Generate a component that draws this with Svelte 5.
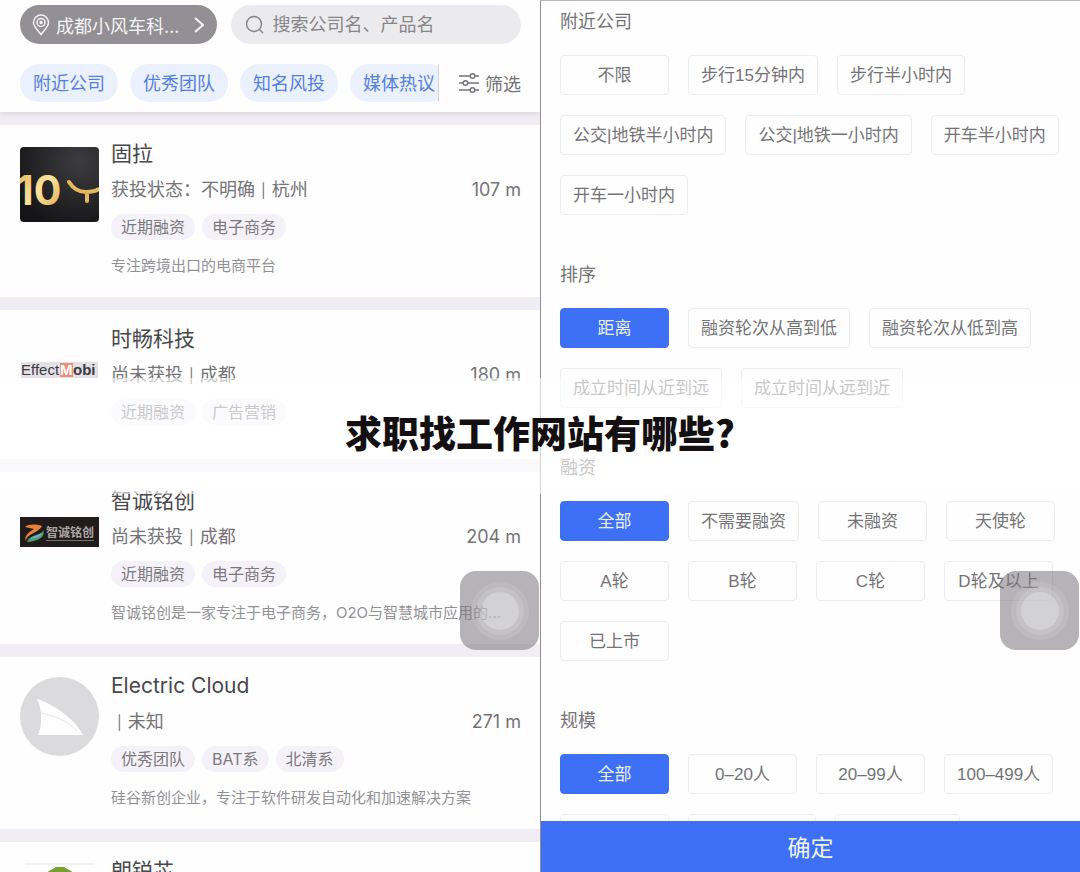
<script lang="ts">
	interface ICompany {
		name: string;
		logo: string;
		status: string;
		city: string;
		distance: string;
		tags: string[];
		description?: string;
	}

	interface IFilterGroup {
		title: string;
		options: string[];
		selected: string;
	}

	const categories = ['附近公司', '优秀团队', '知名风投', '媒体热议'];

	const companies: ICompany[] = [
		{
			name: '固拉',
			logo: 'ten',
			status: '获投状态：不明确',
			city: '杭州',
			distance: '107 m',
			tags: ['近期融资', '电子商务'],
			description: '专注跨境出口的电商平台'
		},
		{
			name: '时畅科技',
			logo: 'effect',
			status: '尚未获投',
			city: '成都',
			distance: '180 m',
			tags: ['近期融资', '广告营销']
		},
		{
			name: '智诚铭创',
			logo: 'zhicheng',
			status: '尚未获投',
			city: '成都',
			distance: '204 m',
			tags: ['近期融资', '电子商务'],
			description: '智诚铭创是一家专注于电子商务，O2O与智慧城市应用的...'
		},
		{
			name: 'Electric Cloud',
			logo: 'shark',
			status: '',
			city: '未知',
			distance: '271 m',
			tags: ['优秀团队', 'BAT系', '北清系'],
			description: '硅谷新创企业，专注于软件研发自动化和加速解决方案'
		},
		{
			name: '朗锐芯',
			logo: 'green',
			status: '',
			city: '',
			distance: '',
			tags: []
		}
	];

	let groups: IFilterGroup[] = [
		{
			title: '附近公司',
			options: [
				'不限',
				'步行15分钟内',
				'步行半小时内',
				'公交|地铁半小时内',
				'公交|地铁一小时内',
				'开车半小时内',
				'开车一小时内'
			],
			selected: ''
		},
		{
			title: '排序',
			options: [
				'距离',
				'融资轮次从高到低',
				'融资轮次从低到高',
				'成立时间从近到远',
				'成立时间从远到近'
			],
			selected: '距离'
		},
		{
			title: '融资',
			options: ['全部', '不需要融资', '未融资', '天使轮', 'A轮', 'B轮', 'C轮', 'D轮及以上', '已上市'],
			selected: '全部'
		},
		{
			title: '规模',
			options: ['全部', '0–20人', '20–99人', '100–499人', '500–999人', '1000–9999人', '10000人以上'],
			selected: '全部'
		}
	];

	const onOptionClick = (group: IFilterGroup, option: string) => {
		group.selected = option;
		groups = groups;
	};
</script>

<div class="page">
	<main class="list">
		<header>
			<div class="row">
				<button class="location">
					<svg width="18" height="22" viewBox="0 0 18 22">
						<path d="M9 20.500C6.500 17 1.500 13 1.500 8.500a7.500 7.500 0 0 1 15 0C16.500 13 11.500 17 9 20.500z" />
						<circle cx="9" cy="8.500" r="4" />
						<circle cx="9" cy="8.500" r="1" />
					</svg>
					<span>成都小风车科...</span>
					<svg class="chevron" width="10" height="16" viewBox="0 0 10 16">
						<path d="M1 1l8 7-8 7" />
					</svg>
				</button>
				<label class="search">
					<svg width="20" height="20" viewBox="0 0 20 20">
						<circle cx="9" cy="9" r="7.500" />
						<path d="M14.500 14.500l3.500 3.500" />
					</svg>
					<input type="text" aria-label="搜索" placeholder="搜索公司名、产品名" />
				</label>
			</div>
			<div class="row tabs">
				<nav>
					{#each categories as category}
						<button class="category">{category}</button>
					{/each}
				</nav>
				<button class="filter">
					<svg width="22" height="22" viewBox="0 0 22 22">
						<path d="M1 4h11M17 4h4M1 11h4M10 11h11M1 18h11M17 18h4" />
						<circle cx="14.500" cy="4" r="2.300" />
						<circle cx="7.500" cy="11" r="2.300" />
						<circle cx="14.500" cy="18" r="2.300" />
					</svg>
					筛选
				</button>
			</div>
		</header>

		{#each companies as company}
			<article>
				<div class="logo">
					{#if company.logo === 'ten'}
						<svg width="79" height="75" viewBox="0 0 79 75">
							<defs>
								<linearGradient id="gold" x1="0" y1="0" x2="1" y2="1">
									<stop offset="0" stop-color="#dcaa4a" />
									<stop offset="0.500" stop-color="#fbe39a" />
									<stop offset="1" stop-color="#d9a54a" />
								</linearGradient>
								<radialGradient id="night" cx="0.750" cy="0.200" r="0.900">
									<stop offset="0" stop-color="#3d3c3e" />
									<stop offset="1" stop-color="#151416" />
								</radialGradient>
							</defs>
							<rect width="79" height="75" rx="4" fill="url(#night)" />
							<text x="-4" y="58" class="ten" fill="url(#gold)">10</text>
							<path
								d="M49 35c5 8 11 10 17 10s10-1 13-3M67 45v9"
								fill="none"
								stroke="#e5b85c"
								stroke-width="4"
								stroke-linecap="round"
							/>
						</svg>
					{:else if company.logo === 'effect'}
						<svg width="79" height="18" viewBox="0 0 79 18">
							<rect x="1" y="1" width="77" height="16" fill="#e3e1e6" />
							<rect x="40" y="2" width="13" height="14" fill="#ec8d7c" />
							<text x="1" y="14" class="effect">Effect</text>
							<text x="40" y="14" class="effect bold light">M</text>
							<text x="53" y="14" class="effect bold">obi</text>
						</svg>
					{:else if company.logo === 'zhicheng'}
						<svg width="79" height="30" viewBox="0 0 79 30">
							<rect width="79" height="30" fill="#211b1b" />
							<path d="M5 10c4-3 10-3 17-1-2 4-7 6-12 9-3 2-4 4-4 6-2-4 1-8 8-12-3-1-6-1-9-2z" fill="#e8813a" />
							<path d="M7 25c2-5 6-6 12-8 2-1 4-2 4-4 2 5-1 8-6 10-3 1-7 2-10 2z" fill="#4ba36c" />
							<path d="M9 22c4-3 8-3 13-6-1 4-7 5-13 6z" fill="#79a8d8" />
							<text x="26" y="20" class="zhicheng">智诚铭创</text>
							<path d="M26 23.500h48" stroke="#77706f" stroke-width="1" />
						</svg>
					{:else if company.logo === 'shark'}
						<svg width="79" height="79" viewBox="0 0 79 79">
							<circle cx="39.500" cy="39.500" r="39.500" fill="#dbdadd" />
							<path d="M17 22c18 6 38 20 46 36H18c4-9 5-25-1-36z" fill="#fff" />
							<path d="M21 36c15 3 28 9 36 18" fill="none" stroke="#e6e5e8" />
						</svg>
					{:else}
						<svg width="79" height="78" viewBox="0 0 79 78">
							<path d="M5 1h69" stroke="#e4e4e6" />
							<path d="M36 4h8l24 14v28L40 62 12 46V18z" fill="#77a22f" />
						</svg>
					{/if}
				</div>
				<div class="info">
					<h2>{company.name}</h2>
					<div class="status">
						{#if company.city}
							<span>{company.status}<span class="bar">|</span>{company.city}</span>
							<span>{company.distance}</span>
						{/if}
					</div>
					<div class="tags">
						{#each company.tags as tag}
							<span class="tag">{tag}</span>
						{/each}
					</div>
					{#if company.description}
						<p>{company.description}</p>
					{/if}
				</div>
			</article>
		{/each}

		<button class="touch" aria-label="辅助触控"><i></i></button>
	</main>

	<aside class="filters">
		<div class="groups">
			{#each groups as group}
				<section>
					<h3>{group.title}</h3>
					<div class="options">
						{#each group.options as option}
							<button
								class="option {option === group.selected ? 'selected' : ''}"
								on:click={() => onOptionClick(group, option)}
							>
								{option}
							</button>
						{/each}
					</div>
				</section>
			{/each}
		</div>
		<button class="confirm">确定</button>
		<button class="touch" aria-label="辅助触控"><i></i></button>
	</aside>

	<div class="banner">
		<h1>求职找工作网站有哪些?</h1>
	</div>
</div>

<style>
	:global(body) {
		margin: 0;
	}

	.page {
		position: relative;
		display: grid;
		grid-template-columns: 1fr 1fr;
		height: 100vh;
		overflow: hidden;
		font-family: Inter, 'Noto Sans CJK SC', sans-serif;
		font-size: 18px;
		color: #747377;
	}

	button,
	input {
		font: inherit;
		color: inherit;
		border: none;
		background: none;
		padding: 0;
		margin: 0;
	}

	button {
		cursor: pointer;
		white-space: nowrap;
	}

	svg {
		flex: none;
	}

	h1,
	h2,
	h3,
	p {
		margin: 0;
		font-weight: 400;
	}

	.list {
		position: relative;
		display: flex;
		flex-direction: column;
		gap: 13px;
		min-width: 0;
		overflow: hidden;
		background: #f0eef4;
	}

	header {
		display: flex;
		flex-direction: column;
		gap: 20px;
		padding: 5px 19px 10px 20px;
		background: #fefefe;
		box-shadow: 0 2px 6px #d9d6dc;
	}

	.row {
		display: flex;
		gap: 14px;
	}

	.location,
	.search {
		display: flex;
		align-items: center;
		box-sizing: border-box;
		height: 39px;
		border-radius: 20px;
	}

	.location {
		gap: 6px;
		padding: 0 13px 0 12px;
		background: #929094;
		color: #f4f4f5;
	}

	.location svg,
	.search svg,
	.filter svg {
		fill: none;
		stroke: currentColor;
		stroke-width: 1.5;
	}

	.location .chevron {
		margin-left: 8px;
		stroke-width: 2;
	}

	.search {
		flex: 1;
		gap: 8px;
		min-width: 0;
		padding: 0 14px;
		background: #ebeaed;
		color: #87868a;
	}

	.search input {
		flex: 1;
		min-width: 0;
		outline: none;
	}

	.search input::placeholder {
		color: #87868a;
		opacity: 1;
	}

	.tabs {
		gap: 0;
	}

	nav {
		display: flex;
		flex: 1;
		gap: 12px;
		min-width: 0;
		overflow: hidden;
	}

	.category {
		flex: none;
		height: 38px;
		padding: 0 13px 2px;
		border-radius: 19px;
		background: #ebf0fd;
		color: #5280dd;
	}

	.filter {
		display: flex;
		align-items: center;
		gap: 5px;
		padding-left: 19px;
		border-left: 1px solid #d5d3d8;
	}

	article {
		display: flex;
		flex: none;
		gap: 12px;
		box-sizing: border-box;
		min-height: 149px;
		padding: 14px 19px 19px 20px;
		background: #fefefe;
	}

	.logo {
		display: flex;
		align-items: center;
		flex: none;
		width: 79px;
		height: 79px;
		margin-top: 6px;
	}

	.ten {
		font: 700 41px Inter, sans-serif;
	}

	.effect {
		font: 15px 'Liberation Sans', sans-serif;
		fill: #3c3a40;
	}

	.effect.bold {
		font-weight: 700;
	}

	.effect.light {
		fill: #fff;
	}

	.zhicheng {
		font: 700 12px 'Noto Sans CJK SC', sans-serif;
		fill: #aaa5a5;
	}

	.info {
		flex: 1;
		min-width: 0;
	}

	h2 {
		font-size: 21px;
		line-height: 30px;
		color: #48474b;
	}

	.status {
		display: flex;
		justify-content: space-between;
		margin-top: 8px;
		line-height: 26px;
	}

	.bar {
		margin: 0 6px;
		font-size: 14px;
	}

	.tags {
		display: flex;
		gap: 7px;
		margin-top: 10px;
	}

	.tag {
		padding: 0 10px;
		border-radius: 13px;
		background: #f4f2f8;
		font-size: 16px;
		line-height: 26px;
		color: #7b7a7e;
	}

	p {
		margin-top: 14px;
		overflow: hidden;
		text-overflow: ellipsis;
		white-space: nowrap;
		font-size: 15px;
		line-height: 24px;
		color: #929195;
	}

	.filters {
		position: relative;
		display: flex;
		flex-direction: column;
		min-width: 0;
		overflow: hidden;
		background: #fefefe;
		border-top: 1px solid #b9b8bb;
		border-left: 1px solid #8f8e92;
	}

	.groups {
		flex: 1;
		min-height: 0;
		overflow: hidden;
		padding: 9px 19px 0;
	}

	section {
		margin-bottom: 48px;
	}

	h3 {
		margin-bottom: 21px;
		font-size: 18px;
		line-height: 24px;
	}

	.options {
		display: flex;
		flex-wrap: wrap;
		gap: 20px 19px;
		font-family: 'Liberation Sans', 'Noto Sans CJK SC', sans-serif;
	}

	.option {
		box-sizing: border-box;
		min-width: 109px;
		height: 40px;
		padding: 0 12px 3px;
		border: 1px solid #ededf1;
		border-radius: 4px;
		font-size: 17px;
	}

	.option.selected {
		border-color: #3d70f4;
		background: #3d70f4;
		color: #eef2fe;
	}

	.confirm {
		flex: none;
		height: 51px;
		padding-bottom: 2px;
		background: #3d70f4;
		font-size: 23px;
		color: #f1f4fe;
	}

	.touch {
		position: absolute;
		right: 1px;
		bottom: 222px;
		display: grid;
		place-items: center;
		width: 79px;
		height: 79px;
		border-radius: 16px;
		background: rgba(120, 117, 123, 0.55);
	}

	.touch i {
		width: 38px;
		height: 38px;
		border-radius: 50%;
		background: rgba(255, 255, 255, 0.4);
		box-shadow:
			0 0 0 5px rgba(255, 255, 255, 0.12),
			0 0 0 10px rgba(255, 255, 255, 0.1);
	}

	.banner {
		position: absolute;
		inset: 0;
		display: grid;
		align-content: center;
		pointer-events: none;
	}

	h1 {
		padding: 28px 0 36px;
		background: rgba(255, 255, 255, 0.6);
		font-family: 'Noto Sans CJK SC', sans-serif;
		font-size: 37px;
		font-weight: 900;
		line-height: 52px;
		text-align: center;
		color: #141012;
	}
</style>
